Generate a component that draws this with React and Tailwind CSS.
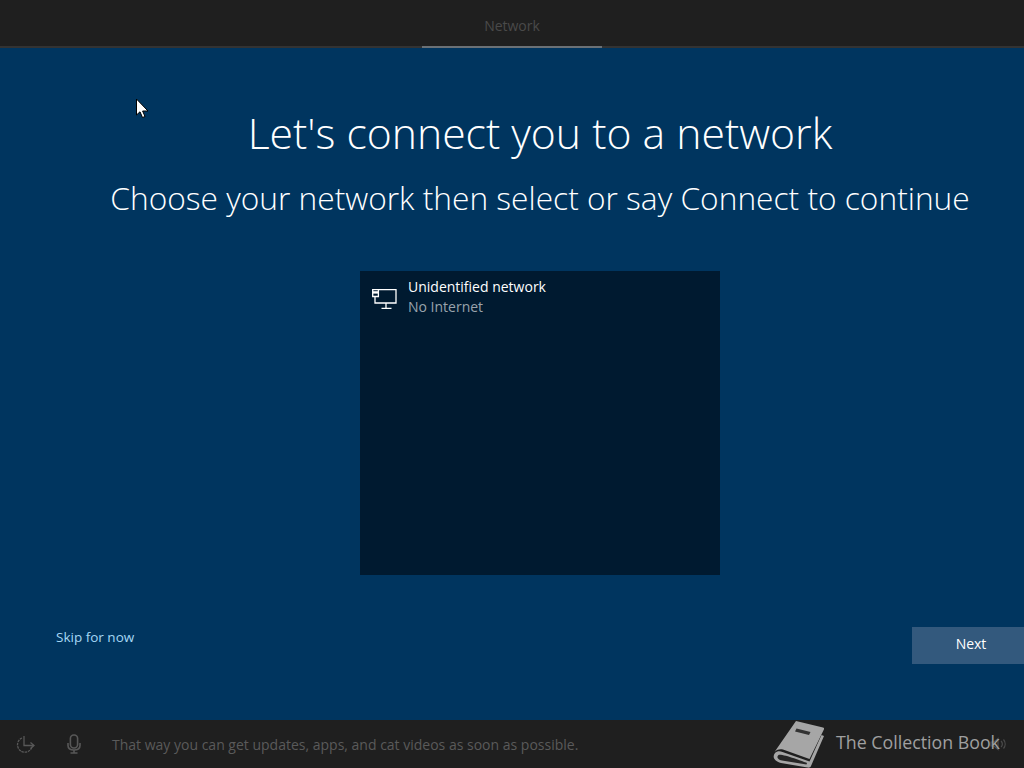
const font = { fontFamily: '"Open Sans", sans-serif' };

function NetworkIcon() {
  return (
    <svg width="25" height="22" viewBox="0 0 25 22" fill="none" stroke="#fff" strokeWidth="1.3" className="shrink-0 mt-[3px]">
      <path d="M6.4 1.6H24V15H3V8.5" />
      <path d="M0.7 1.6H6.4V8.5H0.7Z" />
      <path d="M0.7 4.4H6.4" strokeWidth="2.4" />
      <path d="M14 15V20M9.5 20.4H19.5" />
    </svg>
  );
}

function BookLogo() {
  return (
    <svg width="52" height="48" viewBox="0 0 52 48" fill="#a6a6a6" strokeLinejoin="round">
      <path d="M23 1L50 7.5C51 7.8 51.3 8.5 51 9.2L36.5 39L10 29.5C6.5 28.5 3 30 1.5 32Z" />
      <path d="M2 33C3.8 31.3 6.5 30.8 9.5 32L36.5 41.5L48.5 15L51 16L38 46C37.5 47.5 36 48 34.5 47.6L8 43C1 41 -1 37 2 33Z" />
      <path d="M5.5 35C9 33.5 30 41.5 34 43L33.5 44.5L9 40.5C4 39.5 3.5 36.5 5.5 35Z" fill="#262626" />
      <path d="M23.5 8.5L37.5 12L36 15L22 11.5Z" fill="#333" />
    </svg>
  );
}

export default function App() {
  return (
    <div className="relative flex flex-col w-[1024px] h-[768px] overflow-hidden bg-[#00355f]" style={font}>
      <header className="h-[48px] shrink-0 bg-[#1f1f1f] border-b-2 border-[#333] flex justify-center">
        <div className="w-[180px] h-[48px] -mb-[2px] border-b-2 border-[#6b7176] text-center text-sm leading-[52px] text-[#4a4a4a]">
          Network
        </div>
      </header>

      <main className="flex-1 flex flex-col items-center pl-[56px] text-white">
        <h1 className="mt-[51px] text-[42.7px] leading-[68px] font-light whitespace-nowrap">Let's connect you to a network</h1>
        <p className="mt-[2px] text-[31.7px] leading-[58px] font-light whitespace-nowrap">Choose your network then select or say Connect to continue</p>

        <div className="mt-[44px] w-[360px] h-[304px] bg-[#001a30]">
          <div className="flex items-center gap-[11px] pl-[12px] pt-[6px]">
            <NetworkIcon />
            <div>
              <div className="text-sm leading-[20px]">Unidentified network</div>
              <div className="text-sm leading-[20px] text-[#99a3ac]">No Internet</div>
            </div>
          </div>
        </div>

        <div className="self-end w-[1024px] flex justify-between items-start mt-[52px] pl-[56px]">
          <a className="text-[13.5px] leading-[20px] text-[#a6d8f5]">Skip for now</a>
          <button className="w-[112px] h-[37px] pl-[6px] pb-[3px] bg-[#33597d] text-sm text-white">Next</button>
        </div>
      </main>

      <footer className="h-[48px] shrink-0 bg-[#1f1f1f] flex items-center pl-[16px] pr-[18px] text-[#585858]">
        <svg width="19" height="19" viewBox="0 0 19 19" fill="none" stroke="currentColor" strokeWidth="1.3">
          <path d="M6 3A7.4 7.4 0 1 0 16.2 11" strokeDasharray="2.5 0.8" />
          <path d="M8 1V10.5H18" />
          <path d="M14.5 7.5L18 10.5L14.5 13.5" />
        </svg>
        <svg width="14" height="20" viewBox="0 0 14 20" fill="none" stroke="currentColor" strokeWidth="1.6" className="ml-[32px]">
          <rect x="3.4" y="1" width="7.2" height="13" rx="3.4" />
          <path d="M1 9V11.5C1 14.5 3.5 16 7 16S13 14.5 13 11.5V9" />
          <path d="M7 16V19M3.5 19H10.5" />
        </svg>
        <span className="ml-[31px] pt-[1px] text-sm text-[#5a5a5a]">That way you can get updates, apps, and cat videos as soon as possible.</span>
        <svg width="16" height="14" viewBox="0 0 16 14" fill="none" stroke="#4c4c4c" strokeWidth="1.2" className="ml-auto">
          <path d="M1 5H4L8 1.5V12.5L4 9H1Z" />
          <path d="M11 4A4 4 0 0 1 11 10M13.5 2.5A7 7 0 0 1 13.5 11.5" />
        </svg>
      </footer>

      {/* watermark over the footer */}
      <div className="absolute left-[773px] top-[720px] flex items-center">
        <BookLogo />
        <span className="ml-[11px] -mt-[4px] text-[17.8px] text-[#a0a0a0] whitespace-nowrap">The Collection Book</span>
      </div>

      {/* mouse cursor */}
      <svg className="absolute left-[135px] top-[98px]" width="14" height="21" viewBox="0 0 14 21">
        <path d="M1.5 1V17L5 13.8L7.5 19.5L10 18.5L7.6 13H13Z" fill="#fff" stroke="#000" strokeWidth="1" />
      </svg>
    </div>
  );
}
